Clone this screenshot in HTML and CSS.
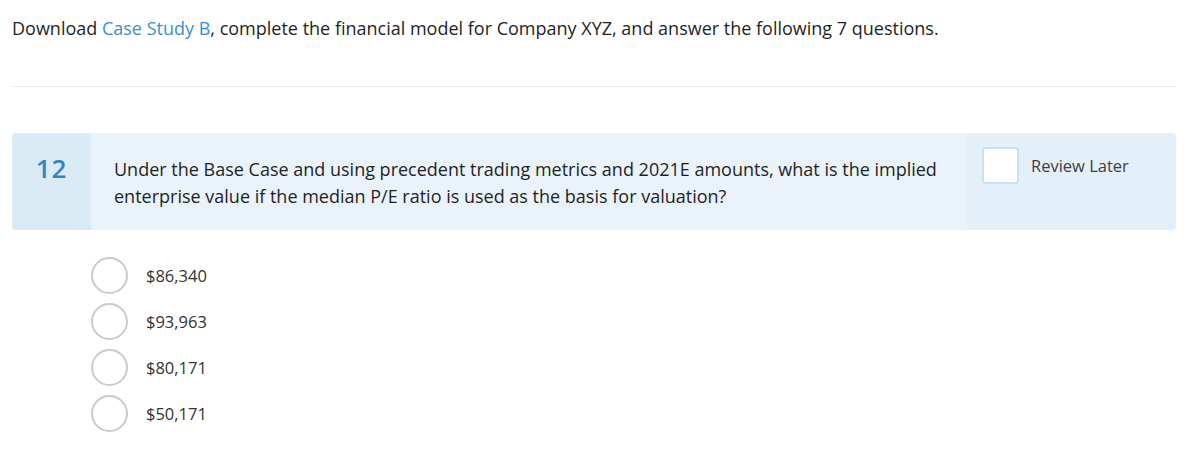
FILE: index.html
```html
<!DOCTYPE html>
<html>
<head>
<meta charset="utf-8">
<link rel="stylesheet" href="styles.css">
</head>
<body>
<div class="page">
  <p class="intro">Download <a class="link" href="#">Case Study B</a>, complete the financial model for Company XYZ, and answer the following 7 questions.</p>
  <hr class="divider">
  <div class="question">
    <div class="qnum">12</div>
    <div class="qtext">Under the Base Case and using precedent trading metrics and 2021E amounts, what is the implied enterprise value if the median P/E ratio is used as the basis for valuation?</div>
    <div class="qside">
      <span class="checkbox"></span>
      <span class="review">Review Later</span>
    </div>
  </div>
  <ul class="options">
    <li class="option"><span class="radio"></span><span class="olabel">$86,340</span></li>
    <li class="option"><span class="radio"></span><span class="olabel">$93,963</span></li>
    <li class="option"><span class="radio"></span><span class="olabel">$80,171</span></li>
    <li class="option"><span class="radio"></span><span class="olabel">$50,171</span></li>
  </ul>
</div>
</body>
</html>
```
FILE: styles.css
```css
html, body {
  margin: 0;
  padding: 0;
  background: #fff;
}
body {
  font-family: "Open Sans", "Liberation Sans", sans-serif;
  color: #222;
}
.page {
  padding: 0 15px 0 12px;
}
.intro {
  margin: 0;
  padding-top: 16px;
  font-size: 18px;
  line-height: 25px;
  color: #1f1f1f;
}
.link {
  color: #3a8fd0;
  text-decoration: none;
}
.divider {
  border: 0;
  border-top: 1px solid #ebebeb;
  margin: 45px 0 46px;
  height: 0;
}
.question {
  display: flex;
  border-radius: 4px;
  overflow: hidden;
  background: #eaf3fb;
  min-height: 96px;
}
.qnum {
  width: 79px;
  flex: none;
  background: #daebf6;
  color: #2f86c6;
  font-size: 26px;
  font-weight: 600;
  letter-spacing: 1px;
  line-height: 34px;
  text-align: center;
  padding-top: 18px;
}
.qtext {
  flex: 1;
  padding: 23px 10px 20px 23px;
  font-size: 18px;
  line-height: 27px;
  color: #1f1f1f;
}
.qside {
  width: 179px;
  flex: none;
  background: #e3f0f9;
  padding: 14px 15px;
  display: flex;
  align-items: flex-start;
}
.checkbox {
  width: 33px;
  height: 33px;
  flex: none;
  background: #fff;
  border: 2px solid #c9e2f3;
  border-radius: 4px;
}
.review {
  margin-left: 12px;
  font-size: 16.5px;
  line-height: 37px;
  color: #3d3d3d;
}
.options {
  list-style: none;
  margin: 0;
  padding: 27px 0 0 79px;
}
.option {
  display: flex;
  align-items: center;
  height: 37px;
  margin-bottom: 9px;
}
.radio {
  width: 33px;
  height: 33px;
  flex: none;
  border: 2px solid #cbcbcb;
  border-radius: 50%;
  background: #fff;
}
.olabel {
  margin-left: 18px;
  font-size: 16.5px;
  color: #333;
}
```
